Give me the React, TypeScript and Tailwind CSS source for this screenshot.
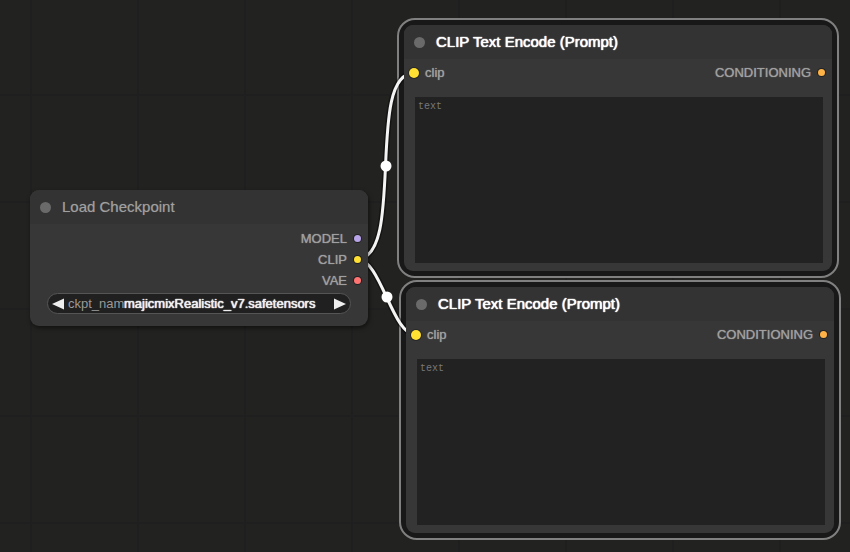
import { useState } from "react";

type Slot = { name: string; color: string };

const CLIP = "bg-[#ffe033]";
const CONDITIONING = "bg-[#ffb347]";

function NodeTitle({ title, tone }: { title: string; tone: string }) {
  return (
    <header className="flex h-[34px] items-center gap-[11px] rounded-t-[9px] bg-[#333333] pl-[10px]">
      <span className="size-[11px] rounded-full bg-[#6a6a6a]" />
      <h2 className={`text-[15px] leading-5 ${tone}`}>{title}</h2>
    </header>
  );
}

function Output({ name, color }: Slot) {
  return (
    <div className="flex h-[21px] items-center justify-end gap-[7px] pr-[7px] text-[#a0a0a0]">
      <span className="[text-shadow:0_0_1px_#a0a0a0]">{name}</span>
      <span className={`size-[7px] rounded-full ring-1 ring-black/40 ${color}`} />
    </div>
  );
}

function Input({ name, color }: Slot) {
  return (
    <div className="flex h-[21px] items-center gap-[6px] pl-[5px] text-[#a0a0a0]">
      <span className={`size-[10px] rounded-full ring-1 ring-black/30 ${color}`} />
      <span className="[text-shadow:0_0_1px_#a0a0a0]">{name}</span>
    </div>
  );
}

function PromptNode({ id, place }: { id: string; place: string }) {
  return (
    <section className={`absolute w-[428px] ${place}`}>
      <div className="absolute -inset-[7px] -z-20 rounded-[18px] border-2 border-[#808080] bg-[#181818]" />
      <div className="rounded-[9px] bg-[#373737] pb-[8px]">
        <NodeTitle
          title="CLIP Text Encode (Prompt)"
          tone="text-white [text-shadow:0_0_1px_#ffffff,0_0_1px_#ffffff]"
        />
        <div className="flex justify-between pt-[3px]">
          <Input name="clip" color={CLIP} />
          <Output name="CONDITIONING" color={CONDITIONING} />
        </div>
        <div className="pt-[14px] pr-[9px] pl-[11px]">
          <textarea
            id={id}
            aria-label="text"
            placeholder="text"
            className="block h-[166px] w-full resize-none bg-[#222222] px-[3px] py-[4px] font-['Liberation_Mono',monospace] text-[10px] leading-[12px] text-[#dddddd] outline-none placeholder:text-[#777777]"
          />
        </div>
      </div>
    </section>
  );
}

function CheckpointNode() {
  const models = ["majicmixRealistic_v7.safetensors"];
  const [index, setIndex] = useState(0);
  const step = (by: number) =>
    setIndex((index + by + models.length) % models.length);

  return (
    <section className="absolute top-[190px] left-[30px] w-[338px] rounded-[9px] bg-[#373737] pb-[12px] shadow-[1px_2px_4px_#00000080]">
      <NodeTitle title="Load Checkpoint" tone="text-[#a0a0a0] [text-shadow:0_0_1px_#a0a0a080]" />
      <div className="pt-[4px]">
        <Output name="MODEL" color="bg-[#b8a4e8]" />
        <Output name="CLIP" color={CLIP} />
        <Output name="VAE" color="bg-[#ff7373]" />
      </div>
      <div className="mx-[17px] mt-[2px] flex h-[21px] items-center rounded-full border border-[#555555] bg-[#202020] px-[4px]">
        <button type="button" aria-label="Previous checkpoint" onClick={() => step(-1)}>
          <svg viewBox="0 0 12 12" className="block size-[12px] fill-[#eeeeee]">
            <path d="M12 0.5v11L0 6z" />
          </svg>
        </button>
        <label
          htmlFor="ckpt"
          className="ml-[4px] w-[56px] leading-4 whitespace-nowrap text-[#999999]"
        >
          ckpt_name
        </label>
        <select
          id="ckpt"
          value={models[index]}
          onChange={(e) => setIndex(models.indexOf(e.target.value))}
          className="z-10 min-w-0 flex-1 appearance-none bg-[#202020] leading-4 text-[#eeeeee] outline-none [text-shadow:0_0_1px_#ffffff,0_0_1px_#ffffff]"
        >
          {models.map((m) => (
            <option key={m}>{m}</option>
          ))}
        </select>
        <button type="button" aria-label="Next checkpoint" onClick={() => step(1)}>
          <svg viewBox="0 0 12 12" className="block size-[12px] fill-[#eeeeee]">
            <path d="M0 0.5v11L12 6z" />
          </svg>
        </button>
      </div>
    </section>
  );
}

function Links() {
  const curves = [
    "M357 259C406 259 365 73 414 73",
    "M357 259C381 259 392 335 416 335",
  ];
  return (
    <svg className="pointer-events-none absolute inset-0 -z-10 h-full w-full" fill="none">
      {curves.map((d) => (
        <g key={d}>
          <path d={d} stroke="#000000" strokeOpacity="0.4" strokeWidth="6" />
          <path d={d} stroke="#f4f4f4" strokeWidth="3" />
        </g>
      ))}
      <circle cx="386" cy="166" r="5.5" fill="#ffffff" />
      <circle cx="387" cy="297" r="5.5" fill="#ffffff" />
    </svg>
  );
}

export default function App() {
  return (
    <main className="relative isolate min-h-screen w-full overflow-hidden bg-[#222220] bg-[linear-gradient(to_right,#1f1f20_2px,transparent_2px),linear-gradient(to_bottom,#1f1f20_2px,transparent_2px)] bg-[size:107px_107px] bg-[position:30px_94px] font-['Liberation_Sans',Arial,sans-serif] text-[13px] leading-4">
      <Links />
      <CheckpointNode />
      <PromptNode id="prompt-a" place="top-[25px] left-[404px]" />
      <PromptNode id="prompt-b" place="top-[287px] left-[406px]" />
    </main>
  );
}
